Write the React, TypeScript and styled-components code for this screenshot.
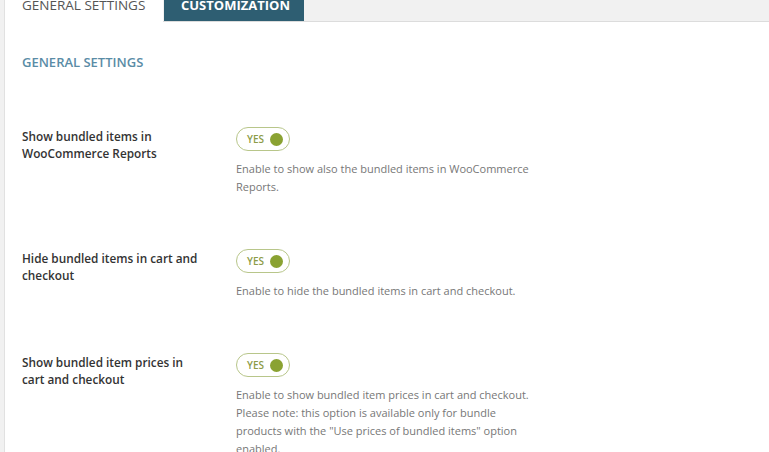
import React from 'react';
import styled, { createGlobalStyle } from 'styled-components';

const GlobalStyle = createGlobalStyle`
  html, body {
    margin: 0;
    padding: 0;
    background: #f1f1f1;
    font-family: "Open Sans", "Noto Sans", sans-serif;
    overflow: hidden;
  }
`;

const Page = styled.div`
  margin-left: 4px;
  margin-top: -12px;
  min-height: 480px;
  background: #fff;
  border-left: 1px solid #e1e1e1;
`;

const TabBar = styled.div`
  display: flex;
  background: #f1f1f1;
  border-bottom: 1px solid #dcdcdc;
  height: 33px;
`;

const Tab = styled.div<{ $active?: boolean }>`
  display: flex;
  align-items: center;
  padding: 0 17px;
  font-size: ${(p) => (p.$active ? '13.5px' : '13px')};
  font-weight: ${(p) => (p.$active ? 400 : 700)};
  color: ${(p) => (p.$active ? '#555' : '#fff')};
  background: ${(p) => (p.$active ? '#fff' : '#2e5e72')};
  margin-right: 1px;
  margin-bottom: ${(p) => (p.$active ? '-1px' : '0')};
  width: ${(p) => (p.$active ? '124px' : '106px')};
`;

const Content = styled.div`
  padding: 31px 17px 0 17px;
`;

const Heading = styled.h2`
  margin: 0 0 56px 0;
  font-size: 13px;
  font-weight: 600;
  color: #5a8ca6;
`;

const Row = styled.div`
  display: grid;
  grid-template-columns: 214px 300px;
  margin-bottom: 53px;
`;

const Label = styled.div`
  width: 180px;
  font-size: 11.8px;
  font-weight: 600;
  color: #333;
  line-height: 17px;
  padding-top: 1px;
`;

const Control = styled.div`
  display: flex;
  flex-direction: column;
  align-items: flex-start;
`;

const Toggle = styled.div`
  display: flex;
  align-items: center;
  gap: 6px;
  height: 22px;
  padding: 0 6px 0 10px;
  border: 1px solid #b8c68a;
  border-radius: 12px;
  font-size: 10px;
  font-weight: 600;
  color: #8d9c48;
`;

const Knob = styled.span`
  width: 13px;
  height: 13px;
  border-radius: 50%;
  background: #8aa232;
`;

const Description = styled.p`
  margin: 9px 0 0 0;
  font-size: 11px;
  line-height: 18px;
  color: #777;
`;

const settings = [
  {
    label: 'Show bundled items in WooCommerce Reports',
    desc: 'Enable to show also the bundled items in WooCommerce Reports.',
  },
  {
    label: 'Hide bundled items in cart and checkout',
    desc: 'Enable to hide the bundled items in cart and checkout.',
  },
  {
    label: 'Show bundled item prices in cart and checkout',
    desc: 'Enable to show bundled item prices in cart and checkout. Please note: this option is available only for bundle products with the "Use prices of bundled items" option enabled.',
  },
];

function App() {
  return (
    <>
      <GlobalStyle />
      <Page>
        <TabBar>
          <Tab $active>GENERAL SETTINGS</Tab>
          <Tab>CUSTOMIZATION</Tab>
        </TabBar>
        <Content>
          <Heading>GENERAL SETTINGS</Heading>
          {settings.map((s) => (
            <Row key={s.label}>
              <Label>{s.label}</Label>
              <Control>
                <Toggle>
                  YES
                  <Knob />
                </Toggle>
                <Description>{s.desc}</Description>
              </Control>
            </Row>
          ))}
        </Content>
      </Page>
    </>
  );
}

export default App;
